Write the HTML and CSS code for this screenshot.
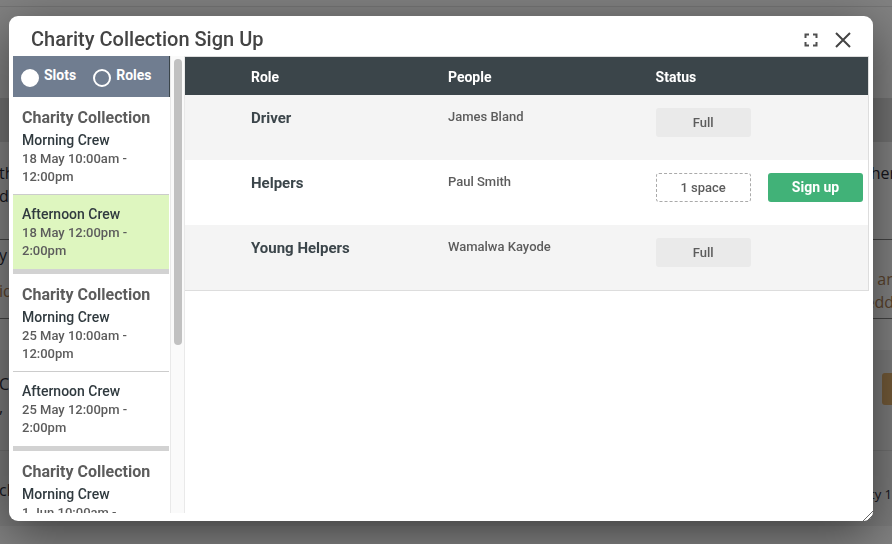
FILE: index.html
```html
<!DOCTYPE html>
<html lang="en">
<head>
<meta charset="utf-8">
<title>Charity Collection Sign Up</title>
<meta name="viewport" content="width=device-width, initial-scale=1">
<link rel="stylesheet" href="styles.css">
</head>
<body>
<div class="page" aria-hidden="true">
  <div class="band band-top"></div>
  <div class="band band-mast"></div>
  <div class="band band-bar"></div>
  <div class="band band-intro"><p>th<br>d</p><p class="end">her</p></div>
  <div class="band band-crew"><p>y</p></div>
  <div class="band band-links"><p class="accent">id</p><p class="accent end">s an<br>edd</p></div>
  <div class="band band-gap"></div>
  <div class="band band-contact"><p>Co<br>,</p><span class="block"></span></div>
  <div class="band band-foot"><p>ch</p><p class="end small">ty 1</p></div>
</div>
<div class="overlay">
  <section class="dialog" role="dialog" aria-labelledby="dialog-title">
    <header class="dialog-head">
      <h1 id="dialog-title">Charity Collection Sign Up</h1>
      <button class="icon-button" type="button" aria-label="Full screen">
        <svg width="14" height="14" viewBox="0 0 14 14" fill="none" stroke="#505050" stroke-width="2"><path d="M1.5 5V1.5H5M9 1.5H12.5V5M12.5 9V12.5H9M5 12.5H1.5V9"/></svg>
      </button>
      <button class="icon-button" type="button" aria-label="Close">
        <svg width="16" height="16" viewBox="0 0 16 16" fill="none" stroke="#444" stroke-width="2"><path d="M1 1L15 15M15 1L1 15"/></svg>
      </button>
    </header>
    <div class="dialog-body">
      <aside class="sidebar">
        <div class="view-switch">
          <label><input type="radio" name="view" checked><span>Slots</span></label>
          <label><input type="radio" name="view"><span>Roles</span></label>
        </div>
        <div class="slots">
          <div class="group">
            <div class="slot"><h2>Charity Collection</h2><h3>Morning Crew</h3><p>18 May 10:00am - 12:00pm</p></div>
            <div class="slot selected"><h3>Afternoon Crew</h3><p>18 May 12:00pm - 2:00pm</p></div>
          </div>
          <div class="group">
            <div class="slot"><h2>Charity Collection</h2><h3>Morning Crew</h3><p>25 May 10:00am - 12:00pm</p></div>
            <div class="slot"><h3>Afternoon Crew</h3><p>25 May 12:00pm - 2:00pm</p></div>
          </div>
          <div class="group">
            <div class="slot"><h2>Charity Collection</h2><h3>Morning Crew</h3><p>1 Jun 10:00am -</p></div>
          </div>
        </div>
      </aside>
      <div class="scroll-track"><div class="scroll-thumb"></div></div>
      <main class="roles">
        <table>
          <thead><tr><th class="role">Role</th><th class="people">People</th><th class="status">Status</th><th class="action"></th></tr></thead>
          <tbody>
            <tr><td class="role">Driver</td><td class="people">James Bland</td><td><span class="badge">Full</span></td><td></td></tr>
            <tr><td class="role">Helpers</td><td class="people">Paul Smith</td><td><span class="badge open">1 space</span></td><td><button class="sign-up" type="button">Sign up</button></td></tr>
            <tr><td class="role">Young Helpers</td><td class="people">Wamalwa Kayode</td><td><span class="badge">Full</span></td><td></td></tr>
          </tbody>
        </table>
      </main>
    </div>
    <svg class="grip" width="10" height="10" viewBox="0 0 10 10" stroke="#666" fill="none"><path d="M0 10L10 0M4 10L10 4M8 10L10 8"/></svg>
  </section>
</div>
</body>
</html>
```
FILE: styles.css
```css
* { box-sizing: border-box; }
body, h1, h2, h3, p { margin: 0; }
body {
  height: 100vh;
  overflow: hidden;
  font-family: Roboto, sans-serif;
  color: #5c5c5c;
  background: #828282;
}
button, input { font: inherit; }

/* Page behind the dialog */
.page {
  display: flex;
  flex-direction: column;
  height: 100%;
  color: #15151c;
  font: 400 16px/23px "Open Sans", sans-serif;
}
.band { display: flex; justify-content: space-between; flex: none; white-space: nowrap; }
.band-top { height: 7px; border-bottom: 1px solid #757575; }
.band-mast { height: 91px; }
.band-bar { height: 44px; background: #737373; }
.band-intro { height: 98px; padding-top: 20px; border-bottom: 1px solid #444; }
.band-crew { height: 28px; padding-top: 4px; }
.band-links { height: 51px; border-bottom: 1px solid #444; }
.band-gap { height: 31px; }
.band-contact { height: 101px; padding-top: 23px; background: #7b7b7b; border-bottom: 1px solid #707070; }
.band-foot { height: 75px; padding-top: 28px; background: #7b7b7b; }
.band p:first-child { margin-left: -1px; }
.accent { color: #5a432c; }
.end { margin-right: -4px; }
.band-links p:first-child { padding-top: 12px; }
.block { width: 10px; height: 32px; border-radius: 3px 0 0 3px; background: #735a38; }
.small { padding-top: 4px; font-size: 13px; }
.band .small { margin-right: 0; }

.overlay {
  position: fixed;
  inset: 0;
  display: flex;
  padding: 16px 19px 23px 9px;
}
.dialog {
  position: relative;
  flex: 1;
  display: flex;
  flex-direction: column;
  min-width: 0;
  padding: 0 4px 8px;
  background: #fff;
  border-radius: 9px;
  box-shadow: 0 12px 50px rgba(0, 0, 0, .5);
}
.dialog-head {
  display: flex;
  align-items: center;
  gap: 17px;
  height: 40px;
  padding: 8px 18px 0;
}
h1 { flex: 1; font-size: 20px; line-height: 30px; margin-bottom: 2px; font-weight: 500; color: #444; }
.icon-button { display: flex; padding: 0; border: 0; background: none; }
.dialog-body { flex: 1; display: flex; min-height: 0; }

.sidebar { flex: none; display: flex; flex-direction: column; width: 157px; }
.view-switch {
  flex: none;
  display: flex;
  gap: 17px;
  height: 41px;
  padding: 8px 8px 0;
  background: #707d90;
  border-right: 1px solid #3b454a;
  color: #fff;
  font-size: 14px;
  font-weight: 700;
  line-height: 22px;
}
.view-switch label { display: flex; gap: 5px; }
.view-switch input {
  appearance: none;
  width: 18px;
  height: 18px;
  margin: 5px 0 0;
  border: 2px solid #fff;
  border-radius: 50%;
}
.view-switch input:checked { background: #fff; }
.slots { flex: 1; overflow: hidden; margin-right: 1px; }
.group { border-bottom: 5px solid #d2d2d2; }
.slot { padding: 9px 9px 8px; }
.slot + .slot { padding-bottom: 9px; border-top: 1px solid #ccc; }
.selected { background: #def6bf; }
h2 { font-size: 16px; line-height: 24px; font-weight: 700; color: #5c5c5c; white-space: nowrap; }
h3 { font-size: 14px; line-height: 20px; font-weight: 500; color: #303a3f; }
.slot p { font-size: 13px; line-height: 18px; font-weight: 500; }

.scroll-track {
  flex: none;
  width: 15px;
  padding: 3px 3px 0;
  background: #fafafa;
  border: solid #e9e9e9;
  border-width: 0 1px;
}
.scroll-thumb { width: 8px; height: 63%; border-radius: 4px; background: #c1c1c1; }

.roles { flex: 1; min-width: 0; }
table {
  width: 100%;
  table-layout: fixed;
  border-spacing: 0;
  border: 1px solid #ddd;
  border-left: 0;
}
th, td { padding: 0; text-align: left; vertical-align: top; }
th { height: 38px; padding-top: 2px; background: #3b454a; color: #fff; font-size: 14px; line-height: 36px; font-weight: 700; }
td { height: 65px; padding-top: 13px; }
tbody tr:nth-child(odd) td { background: #f4f4f4; }
th.role { width: 38.5%; }
th.people { width: 30.4%; }
th.action { width: 100px; }
.role { padding-left: 66px; }
td.role { color: #3b454a; font-size: 15px; line-height: 20px; font-weight: 700; }
td.people { font-size: 13px; line-height: 18px; font-weight: 500; }
.badge, .sign-up {
  display: block;
  width: 95px;
  height: 29px;
  border-radius: 3px;
  font-size: 13px;
  line-height: 29px;
  font-weight: 500;
  text-align: center;
}
.badge { background: #eaeaea; }
.open { border: 1px dashed #aaa; background: none; line-height: 27px; }
.sign-up { padding: 0; border: 0; background: #41b278; color: #fff; font-size: 14px; font-weight: 700; }
.grip { position: absolute; right: 0; bottom: 0; }
```
